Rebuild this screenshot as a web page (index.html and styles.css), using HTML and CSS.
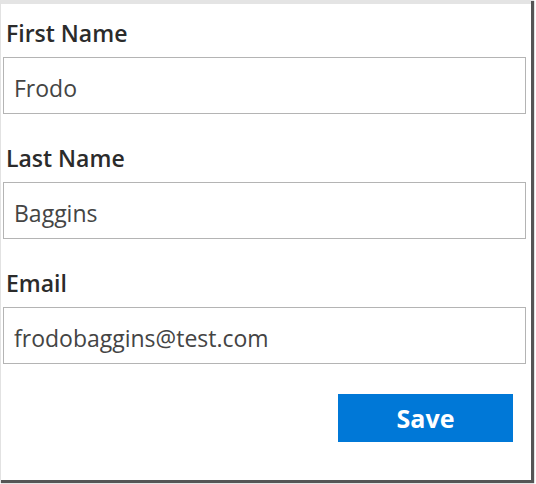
FILE: index.html
```html
<!DOCTYPE html>
<html>
<head>
<meta charset="utf-8">
<link rel="stylesheet" href="styles.css">
</head>
<body>
<div class="frame">
  <form class="form">
    <div class="field">
      <label class="label">First Name</label>
      <input class="input" type="text" value="Frodo">
    </div>
    <div class="field">
      <label class="label">Last Name</label>
      <input class="input" type="text" value="Baggins">
    </div>
    <div class="field">
      <label class="label">Email</label>
      <input class="input" type="text" value="frodobaggins@test.com">
    </div>
    <div class="actions">
      <button class="save" type="button">Save</button>
    </div>
  </form>
</div>
</body>
</html>
```
FILE: styles.css
```css
html, body {
  margin: 0;
  padding: 0;
  background: #ffffff;
}
body {
  height: 484px;
  overflow: hidden;
}
.frame {
  box-sizing: border-box;
  width: 531px;
  height: 480px;
  border-top: 4px solid #e4e4e4;
  border-left: 1px solid #e2e2e2;
  background: #ffffff;
  box-shadow: 2px 2px 1px 1px #555555;
  padding: 15px 0 0 2px;
  font-family: "Open Sans", "Noto Sans", sans-serif;
}
.form {
  display: flex;
  flex-direction: column;
  width: 523px;
}
.field {
  display: flex;
  flex-direction: column;
  margin-bottom: 30px;
}
.field:last-of-type {
  margin-bottom: 29px;
}
.label {
  display: block;
  font-size: 23px;
  line-height: 28px;
  font-weight: 600;
  color: #2b2b2b;
  margin: 0 0 10px 3px;
}
.input {
  box-sizing: border-box;
  width: 523px;
  height: 57px;
  margin: 0;
  border: 1px solid #b4b4b4;
  padding: 5px 10px 0 10px;
  font-family: "Open Sans", "Noto Sans", sans-serif;
  font-size: 23px;
  color: #444444;
  background: #ffffff;
  outline: none;
}
.actions {
  display: flex;
  justify-content: flex-end;
  padding-right: 13px;
}
.save {
  width: 175px;
  height: 48px;
  border: none;
  margin: 0;
  padding: 0;
  background: #0078d7;
  color: #ffffff;
  font-family: "Open Sans", "Noto Sans", sans-serif;
  font-size: 25px;
  font-weight: 700;
}
```
